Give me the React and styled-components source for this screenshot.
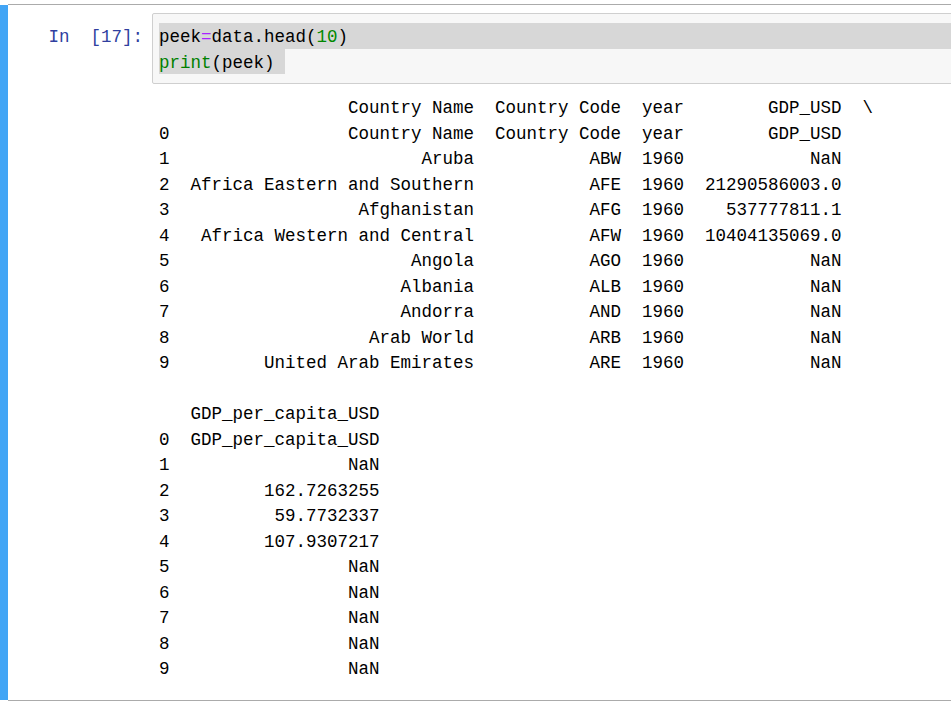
import React from "react";
import styled, { createGlobalStyle } from "styled-components";

const Global = createGlobalStyle`
  html, body { margin: 0; padding: 0; background: #fff; overflow: hidden; }
  body { width: 951px; height: 704px; }
`;

const MONO = `"Liberation Mono", "DejaVu Sans Mono", monospace`;

const Page = styled.div`
  padding-top: 4px;
  font-family: ${MONO};
  font-size: 17.5px;
  line-height: 25.5px;
  color: #000;
`;

const Cell = styled.div`
  display: flex;
`;

const SelectBar = styled.div`
  width: 8px;
  flex: none;
  background: #42a5f5;
  margin: 1px 0;
`;

const CellBody = styled.div`
  flex: 1;
  border-top: 1px solid #ababab;
  border-bottom: 1px solid #ababab;
  padding: 8px 0 17px;
  min-width: 0;
`;

const Row = styled.div`
  display: flex;
  align-items: flex-start;
`;

const Prompt = styled.div`
  width: 144px;
  flex: none;
  box-sizing: border-box;
  padding-right: 9px;
  padding-top: ${(p) => p.$top || 0}px;
  text-align: right;
  color: #303f9f;
  white-space: pre;
`;

const InputArea = styled.div`
  flex: 1;
  margin-right: -40px;
  background: #f7f7f7;
  border: 1px solid #cfcfcf;
  border-radius: 2px;
  padding: 9px 0 9px 6px;
`;

const CodeLine = styled.div`
  white-space: pre;
  height: 25.5px;
`;

const Selected = styled.span`
  display: ${(p) => (p.$full ? "block" : "inline-block")};
  box-sizing: border-box;
  height: 25.5px;
  padding-top: 2px;
  background: #d7d7d7;
`;

const Tok = styled.span`
  color: ${(p) => p.$c || "#000"};
`;

const OutputArea = styled.div`
  flex: 1;
  padding: 12px 0 0 7px;
  white-space: pre;
`;

const OutLine = styled.div`
  height: 25.5px;
`;

const rows = [
  ["Country Name", "Country Code", "year", "GDP_USD", "GDP_per_capita_USD"],
  ["Aruba", "ABW", "1960", "NaN", "NaN"],
  ["Africa Eastern and Southern", "AFE", "1960", "21290586003.0", "162.7263255"],
  ["Afghanistan", "AFG", "1960", "537777811.1", "59.7732337"],
  ["Africa Western and Central", "AFW", "1960", "10404135069.0", "107.9307217"],
  ["Angola", "AGO", "1960", "NaN", "NaN"],
  ["Albania", "ALB", "1960", "NaN", "NaN"],
  ["Andorra", "AND", "1960", "NaN", "NaN"],
  ["Arab World", "ARB", "1960", "NaN", "NaN"],
  ["United Arab Emirates", "ARE", "1960", "NaN", "NaN"],
];

const headers = ["Country Name", "Country Code", "year", "GDP_USD", "GDP_per_capita_USD"];
const widths = [27, 12, 4, 13, 18];

const fmt = (idx, cells, ws) =>
  idx + cells.map((c, i) => "  " + c.padStart(ws[i])).join("");

const lines = [
  fmt(" ", headers.slice(0, 4), widths.slice(0, 4)) + "  \\",
  ...rows.map((r, i) => fmt(String(i), r.slice(0, 4), widths.slice(0, 4))),
  "",
  fmt(" ", headers.slice(4), widths.slice(4)),
  ...rows.map((r, i) => fmt(String(i), r.slice(4), widths.slice(4))),
];

export default function App() {
  return (
    <Page>
      <Global />
      <Cell>
        <SelectBar />
        <CellBody>
          <Row>
            <Prompt $top={12}>{"In\u00a0\u00a0[17]:"}</Prompt>
            <InputArea>
              <CodeLine>
                <Selected $full>
                  <Tok>peek</Tok>
                  <Tok $c="#aa22ff">=</Tok>
                  <Tok>data.head(</Tok>
                  <Tok $c="#008800">10</Tok>
                  <Tok>)</Tok>
                </Selected>
              </CodeLine>
              <CodeLine>
                <Selected>
                  <Tok $c="#008000">print</Tok>
                  <Tok>(peek) </Tok>
                </Selected>
              </CodeLine>
            </InputArea>
          </Row>
          <Row>
            <Prompt />
            <OutputArea>
              {lines.map((l, i) => (
                <OutLine key={i}>{l}</OutLine>
              ))}
            </OutputArea>
          </Row>
        </CellBody>
      </Cell>
    </Page>
  );
}
